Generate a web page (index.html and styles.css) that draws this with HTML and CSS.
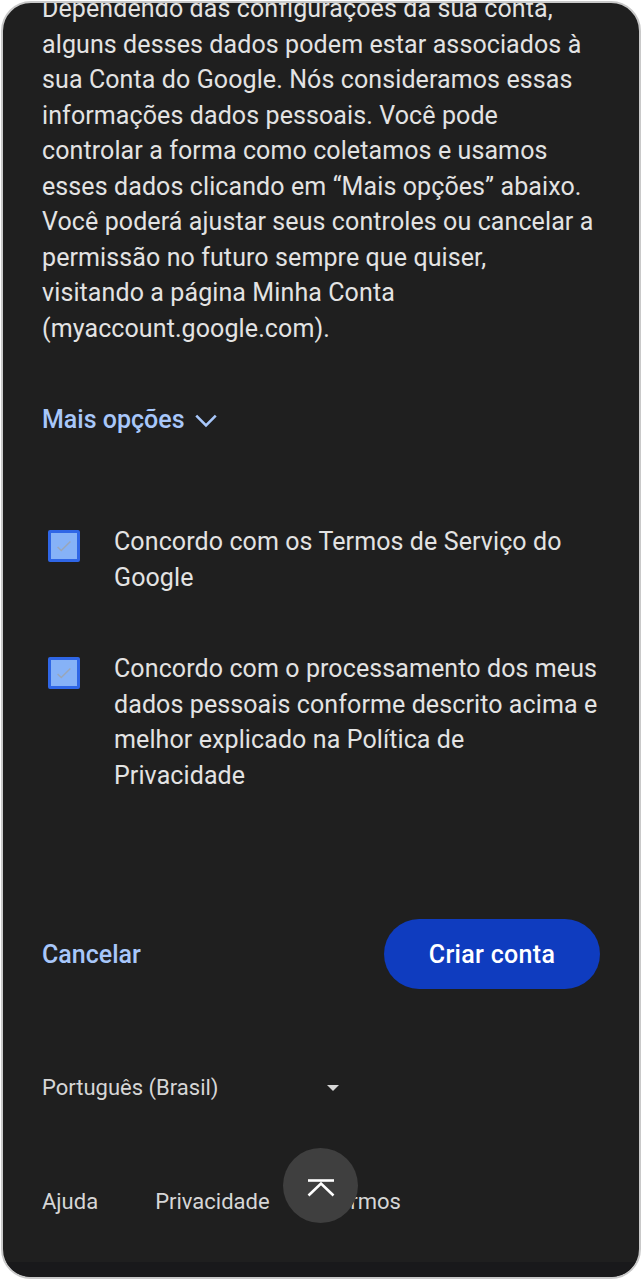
FILE: index.html
```html
<!DOCTYPE html>
<html lang="pt-BR">
<head>
    <meta charset="UTF-8">
    <meta name="viewport" content="width=device-width, initial-scale=1.0">
    <title>Criar conta</title>
    <link rel="stylesheet" href="styles.css">
</head>
<body>

<div class="phone">
    <div class="screen">
        <p class="intro">Dependendo das configurações da sua conta, alguns desses dados podem estar associados à sua Conta do Google. Nós consideramos essas informações dados pessoais. Você pode controlar a forma como coletamos e usamos esses dados clicando em “Mais opções” abaixo. Você poderá ajustar seus controles ou cancelar a permissão no futuro sempre que quiser,<br>visitando a página Minha Conta<br>(myaccount.google.com).</p>

        <button class="more">Mais opções
            <svg width="26" height="26" viewBox="0 0 24 24"><path d="M3 8l9 9 9-9" fill="none" stroke="#a8c7fa" stroke-width="2.4"/></svg>
        </button>

        <label class="agree">
            <span class="box"><svg width="22" height="22" viewBox="0 0 24 24"><path d="M5 13l4 4 10-10" fill="none" stroke="#9aa6b8" stroke-width="1.6"/></svg></span>
            <span class="label">Concordo com os Termos de Serviço do Google</span>
        </label>

        <label class="agree">
            <span class="box"><svg width="22" height="22" viewBox="0 0 24 24"><path d="M5 13l4 4 10-10" fill="none" stroke="#9aa6b8" stroke-width="1.6"/></svg></span>
            <span class="label">Concordo com o processamento dos meus dados pessoais conforme descrito acima e melhor explicado na Política de Privacidade</span>
        </label>

        <div class="actions">
            <button class="cancel">Cancelar</button>
            <button class="create">Criar conta</button>
        </div>

        <div class="lang">
            <span>Português (Brasil)</span>
            <svg width="14" height="8" viewBox="0 0 14 8"><path d="M1 1h12l-6 6z" fill="#d6d6d6"/></svg>
        </div>

        <div class="links">
            <a>Ajuda</a>
            <a>Privacidade</a>
            <a>Termos</a>
        </div>

        <div class="bottom-bar"></div>

        <button class="to-top">
            <svg width="28" height="28" viewBox="0 0 28 28"><path d="M1 8.5h26" stroke="#fff" stroke-width="2.6"/><path d="M1.5 23.5l12.5-12 12.5 12" fill="none" stroke="#fff" stroke-width="2.6"/></svg>
        </button>
    </div>
</div>

</body>
</html>
```

FILE: styles.css
```css
body {
    margin: 0;
    background: #fff;
    font-family: Roboto, "Noto Sans", Arial, sans-serif;
}

.phone {
    margin: 1px;
    height: 1274px;
    border: 2px solid #c9c9c9;
    border-radius: 30px;
    overflow: hidden;
    background: #1f1f1f;
}

.screen {
    position: relative;
    display: flow-root;
    height: 100%;
    padding: 0 39px 0 39px;
    color: #e3e3e3;
}

.intro {
    margin: -12px 0 0;
    font-size: 25px;
    line-height: 35.5px;
    letter-spacing: 0.1px;
}

button {
    font-family: inherit;
    border: none;
    background: none;
    cursor: pointer;
}

.more {
    display: flex;
    align-items: center;
    gap: 8px;
    margin-top: 59px;
    padding: 0;
    font-size: 25px;
    font-weight: 500;
    color: #a8c7fa;
}

.agree {
    display: flex;
    gap: 34px;
    margin-top: 90px;
    font-size: 25px;
    line-height: 35.5px;
    letter-spacing: 0.1px;
}

.agree + .agree {
    margin-top: 56px;
}

.box {
    flex: none;
    width: 26px;
    height: 26px;
    margin: 6px 0 0 6px;
    border: 3px solid #2f66e6;
    border-radius: 2px;
    background: #86b2f7;
    display: flex;
    align-items: center;
    justify-content: center;
}

.actions {
    display: flex;
    justify-content: space-between;
    align-items: center;
    margin-top: 126px;
}

.cancel {
    padding: 0;
    font-size: 25px;
    font-weight: 500;
    color: #a8c7fa;
}

.create {
    width: 216px;
    height: 70px;
    border-radius: 35px;
    background: #0f3cbf;
    color: #fff;
    font-size: 25px;
    font-weight: 500;
    letter-spacing: 0.3px;
}

.lang {
    display: flex;
    align-items: center;
    gap: 107px;
    margin-top: 86px;
    font-size: 22px;
    color: #d6d6d6;
}

.links {
    display: flex;
    gap: 57px;
    margin-top: 89px;
    font-size: 22px;
    color: #d6d6d6;
}

.bottom-bar {
    position: absolute;
    left: 0;
    right: 0;
    bottom: 0;
    height: 15px;
    background: #19191b;
}

.to-top {
    position: absolute;
    left: 280px;
    top: 1145px;
    width: 75px;
    height: 75px;
    border-radius: 50%;
    background: #3f3f3f;
    display: flex;
    align-items: center;
    justify-content: center;
    padding: 0;
}
```
